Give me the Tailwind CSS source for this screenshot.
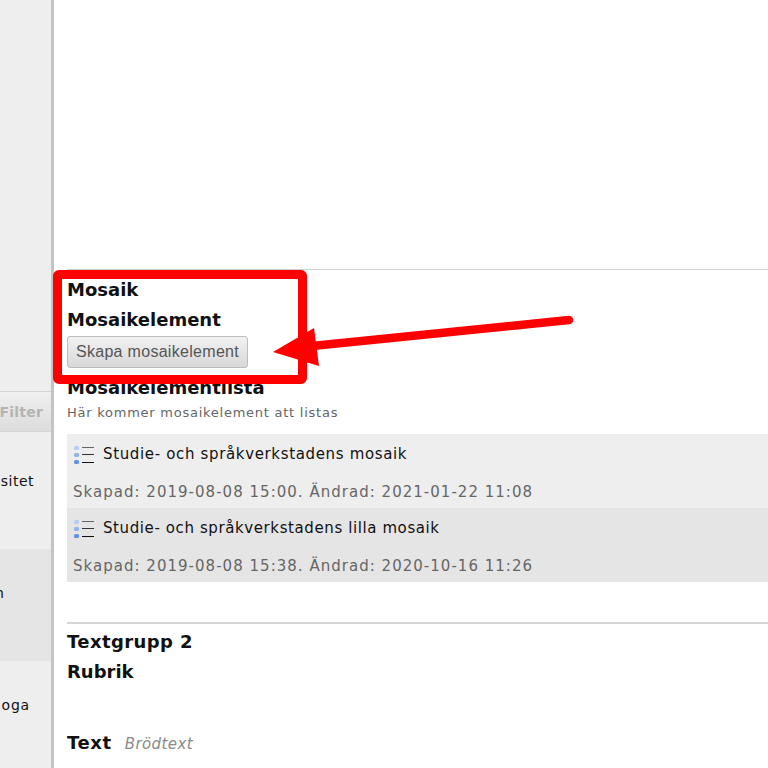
<!DOCTYPE html>
<html lang="sv">
<head>
  <meta charset="UTF-8" />
  <meta name="viewport" content="width=device-width, initial-scale=1.0" />
  <title>Mosaik</title>
  <script src="https://cdn.jsdelivr.net/npm/@tailwindcss/browser@4"></script>
</head>
<body class="bg-white h-[768px] w-[768px] overflow-hidden relative font-['DejaVu_Sans',sans-serif] text-[#111111]">
  <div class="flex h-[768px]">
    <!-- Sidemeny -->
    <aside class="w-[54px] shrink-0 bg-[#eeeeee] border-r-[3px] border-[#c4c4c4] overflow-hidden">
      <div class="h-[391px]"></div>
      <div class="h-[41px] pt-[2px] bg-gradient-to-b from-[#f0f0f0] to-[#dcdcdc] border-y border-[#d4d4d4] flex items-center justify-end pr-2 text-[14px] font-bold tracking-[0.2px] text-[#b4b4b4]">Filter</div>
      <div class="h-[117px] relative text-[14px] tracking-[0.5px]"><span class="absolute right-[17px] top-[39px]">sitet</span></div>
      <div class="h-[112px] bg-[#e5e5e5] relative text-[14px]"><span class="absolute left-[-5px] top-[34px]">n</span></div>
      <div class="relative text-[14px] tracking-[0.8px]"><span class="absolute right-[21px] top-[34px]">oga</span></div>
    </aside>

    <main class="flex-1 pl-[13px] min-w-0">
      <div class="h-[269px]"></div>
      <div class="border-t border-[#d0d0d0] h-[1px]"></div>
      <h2 class="text-[18px] font-bold leading-[30px] mt-[5px]">Mosaik</h2>
      <h3 class="text-[18px] font-bold leading-[30px]">Mosaikelement</h3>
      <button class="mt-[1px] block h-[32px] w-[181px] rounded-[3px] border border-[#bdbdbd] bg-gradient-to-b from-[#f2f2f2] to-[#d8d8d8] font-['Liberation_Sans',sans-serif] text-[16px] tracking-[0.3px] text-[#555555]">Skapa mosaikelement</button>
      <h3 class="text-[18px] font-bold leading-[30px] mt-[5px]">Mosaikelementlista</h3>
      <p class="text-[13px] tracking-[0.75px] leading-[16px] text-[#666666] mt-[2px]">Här kommer mosaikelement att listas</p>

      <ul class="mt-[13px]">
        <li class="h-[74px] bg-[#eeeeee] pl-[7px]">
          <div class="flex items-center h-[42px] gap-[9px] text-[15px] tracking-[0.65px]">
            <svg width="20" height="18" viewBox="0 0 20 18" class="shrink-0">
              <rect x="0" y="0" width="5" height="4" rx="1.5" fill="#b5cdf3" /><rect x="0" y="7" width="5" height="4" rx="1.5" fill="#8fb3ee" /><rect x="0" y="14" width="5" height="4" rx="1.5" fill="#5f93e6" />
              <path d="M8 1.5h12" stroke="#666666" stroke-width="1" /><path d="M8 8.5h12" stroke="#333333" stroke-width="1" /><path d="M8 16.5h12" stroke="#111111" stroke-width="1" />
            </svg>
            <span class="mt-[-2px]">Studie- och språkverkstadens mosaik</span>
          </div>
          <p class="text-[15px] tracking-[1.02px] leading-[20px] mt-[6px] ml-[-1px] text-[#666666] whitespace-nowrap">Skapad: 2019-08-08 15:00. Ändrad: 2021-01-22 11:08</p>
        </li>
        <li class="h-[74px] bg-[#e5e5e5] pl-[7px]">
          <div class="flex items-center h-[42px] gap-[9px] text-[15px] tracking-[0.6px]">
            <svg width="20" height="18" viewBox="0 0 20 18" class="shrink-0">
              <rect x="0" y="0" width="5" height="4" rx="1.5" fill="#b5cdf3" /><rect x="0" y="7" width="5" height="4" rx="1.5" fill="#8fb3ee" /><rect x="0" y="14" width="5" height="4" rx="1.5" fill="#5f93e6" />
              <path d="M8 1.5h12" stroke="#666666" stroke-width="1" /><path d="M8 8.5h12" stroke="#333333" stroke-width="1" /><path d="M8 16.5h12" stroke="#111111" stroke-width="1" />
            </svg>
            <span class="mt-[-2px]">Studie- och språkverkstadens lilla mosaik</span>
          </div>
          <p class="text-[15px] tracking-[1.02px] leading-[20px] mt-[6px] ml-[-1px] text-[#666666] whitespace-nowrap">Skapad: 2019-08-08 15:38. Ändrad: 2020-10-16 11:26</p>
        </li>
      </ul>

      <div class="border-t-2 border-[#d4d4d4] mt-[40px]"></div>
      <h2 class="text-[18px] font-bold tracking-[0.4px] leading-[30px] mt-[3px]">Textgrupp 2</h2>
      <h3 class="text-[18px] font-bold leading-[30px]">Rubrik</h3>
      <div class="flex items-baseline gap-[13px] mt-[41px]">
        <span class="text-[18px] font-bold tracking-[0.6px] leading-[30px]">Text</span>
        <span class="text-[15px] italic tracking-[0.4px] text-[#8a8a8a]">Brödtext</span>
      </div>
    </main>
  </div>

  <!-- Röd markering och pil ovanpå -->
  <div class="absolute left-[53px] top-[270px] w-[254px] h-[114px] border-[9px] border-[#ff0000] rounded-[6px]"></div>
  <svg class="absolute left-0 top-0" width="768" height="768" viewBox="0 0 768 768">
    <path d="M312 346L569 320" stroke="#ff0000" stroke-width="8.5" stroke-linecap="round" />
    <path d="M273 352L314 328L319 366Z" fill="#ff0000" />
  </svg>
</body>
</html>
